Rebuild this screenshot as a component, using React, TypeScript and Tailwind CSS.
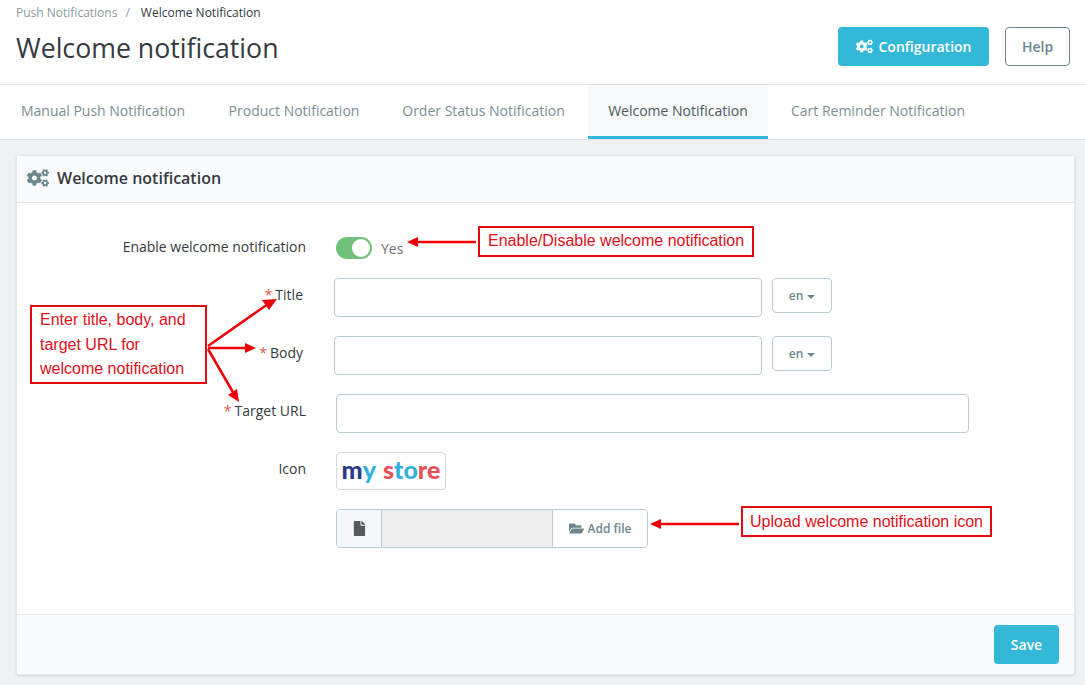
import { FaCogs, FaFile, FaFolderOpen } from "react-icons/fa";

const tabs = [
  { label: "Manual Push Notification", width: "w-[207px] pr-[1px]" },
  { label: "Product Notification", width: "w-[174px]" },
  { label: "Order Status Notification", width: "w-[207px] pr-[2px]" },
  { label: "Welcome Notification", width: "w-[180px]", active: true },
  { label: "Cart Reminder Notification", width: "w-[218px] pl-[2px]" },
];

function Required({ label, className }: { label: string; className: string }) {
  return (
    <div className={`text-right text-sm leading-5 text-[#363a41] ${className}`}>
      <span className="mr-[3px] text-[#e0584f]">*</span>
      {label}
    </div>
  );
}

function LangButton() {
  return (
    <button
      type="button"
      className="ml-[10px] flex h-[35px] w-[60px] items-center justify-center gap-1 rounded border border-[#bbcdd2] bg-white pt-[1px] text-xs font-semibold text-[#6c868e]"
    >
      en
      <span className="mt-[1px] border-x-[4px] border-t-[4px] border-x-transparent border-t-[#6c868e]" />
    </button>
  );
}

function Callout({ className, children }: { className: string; children: React.ReactNode }) {
  return (
    <div
      className={`absolute border-2 border-[#e30a0f] bg-white font-['Liberation_Sans',sans-serif] text-base text-[#e0101a] ${className}`}
    >
      {children}
    </div>
  );
}

function App() {
  return (
    <div className="relative h-[685px] w-[1085px] overflow-hidden bg-[#eff1f2] font-['Open_Sans',sans-serif]">
      <header className="flex h-[85px] justify-between border-b border-[#dfe3e5] bg-white pl-4 pr-[15px]">
        <div>
          <div className="flex pt-[4px] text-xs leading-[17px]">
            <span className="text-[#8a9aa0]">Push Notifications</span>
            <span className="ml-[8px] text-[#8a9aa0]">/</span>
            <span className="ml-[11px] text-[#363a41]">Welcome Notification</span>
          </div>
          <h1 className="mt-[7px] text-[26.7px] leading-[40px] text-[#363a41]">Welcome notification</h1>
        </div>
        <div className="flex gap-4 pt-[27px]">
          <button
            type="button"
            className="flex h-[39px] w-[151px] items-center justify-center gap-[6px] rounded bg-[#34b8d8] text-sm font-semibold text-white"
          >
            <FaCogs className="text-[17px]" />
            Configuration
          </button>
          <button
            type="button"
            className="h-[39px] w-[65px] rounded border border-[#6c868e] bg-white text-sm font-semibold text-[#6c868e]"
          >
            Help
          </button>
        </div>
      </header>

      <nav className="flex h-[55px] border-b border-[#dfe3e5] bg-white">
        {tabs.map((tab) => (
          <div
            key={tab.label}
            className={`flex items-center justify-center text-sm ${tab.width} ${
              tab.active
                ? "border-b-[3px] border-[#34b8d8] bg-[#f7f9fa] pt-[1px] text-[#4c5a60]"
                : "pb-[2px] text-[#7b8f96]"
            }`}
          >
            {tab.label}
          </div>
        ))}
      </nav>

      <section className="mx-4 mt-[15px] mr-[10px] flex h-[520px] flex-col rounded border border-[#e3e7e9] bg-white shadow-sm">
        <div className="flex h-[47px] shrink-0 items-center gap-2 border-b border-[#e3e7e9] bg-[#fafbfc] pb-[2px] pl-[10px]">
          <FaCogs className="text-[22px] text-[#6c868e]" />
          <h2 className="text-base font-semibold text-[#363a41]">Welcome notification</h2>
        </div>

        <div className="grow pt-[34px]">
          <div className="flex h-[22px] items-center">
            <div className="mb-[2px] w-[289px] text-right text-sm text-[#363a41]">Enable welcome notification</div>
            <div className="ml-[30px] flex h-[22px] w-[36px] items-center justify-end rounded-full bg-[#70c07a] pr-[2px]">
              <span className="size-[18px] rounded-full bg-white" />
            </div>
            <span className="ml-[9px] mt-[2px] text-sm text-[#6c6f73]">Yes</span>
          </div>

          <div className="mt-[19px] flex items-start">
            <Required label="Title" className="w-[286px] pt-[7px]" />
            <input className="ml-[31px] h-[39px] w-[428px] rounded border border-[#bbcdd2] bg-white" />
            <LangButton />
          </div>

          <div className="mt-[19px] flex items-start">
            <Required label="Body" className="w-[286px] pt-[7px]" />
            <input className="ml-[31px] h-[39px] w-[428px] rounded border border-[#bbcdd2] bg-white" />
            <LangButton />
          </div>

          <div className="mt-[19px] flex items-start">
            <Required label="Target URL" className="w-[289px] pt-[7px]" />
            <input className="ml-[30px] h-[39px] w-[633px] rounded border border-[#bbcdd2] bg-white" />
          </div>

          <div className="mt-[19px] flex items-start">
            <div className="w-[289px] pt-[7px] text-right text-sm leading-5 text-[#363a41]">Icon</div>
            <div className="ml-[30px] flex h-[38px] w-[110px] items-center justify-center rounded border border-[#d3d8da] bg-white pb-[3px] font-['Lato',sans-serif] text-[25px] leading-none font-black">
              <span className="text-[#2b3a8c]">m</span>
              <span className="mr-[7px] text-[#35b0dc]">y</span>
              <span className="text-[#e9515a]">s</span>
              <span className="text-[#35b0dc]">to</span>
              <span className="text-[#e9515a]">re</span>
            </div>
          </div>

          <div className="ml-[319px] mt-[19px] flex h-[39px] w-[312px] overflow-hidden rounded border border-[#bbcdd2] bg-white">
            <div className="flex w-[45px] items-center justify-center border-r border-[#bbcdd2] bg-[#f4f8fa]">
              <FaFile className="text-[15px] text-[#55595c]" />
            </div>
            <div className="grow bg-[#eeeeee]" />
            <div className="flex w-[95px] items-center justify-center gap-[4px] border-l border-[#bbcdd2] text-xs font-semibold text-[#6c868e]">
              <FaFolderOpen className="text-[15px]" />
              Add file
            </div>
          </div>
        </div>

        <div className="flex h-[60px] shrink-0 items-start justify-end border-t border-[#e9ecee] bg-[#fafbfc] pr-[15px] pt-[10px]">
          <button type="button" className="h-[39px] w-[65px] rounded bg-[#34b8d8] text-sm font-semibold text-white">
            Save
          </button>
        </div>
      </section>

      {/* screenshot annotations drawn over the page */}
      <Callout className="left-[478px] top-[226px] h-[31px] w-[276px] pl-2 leading-[25px]">
        Enable/Disable welcome notification
      </Callout>
      <Callout className="left-[30px] top-[305px] h-[79px] w-[177px] pl-2 pt-[1px] leading-[24.5px]">
        Enter title, body, and
        <br />
        target URL for
        <br />
        welcome notification
      </Callout>
      <Callout className="left-[741px] top-[506px] h-[31px] w-[251px] pl-[7px] pt-[1px] leading-[25px]">
        Upload welcome notification icon
      </Callout>

      <svg className="pointer-events-none absolute left-0 top-0" width={1085} height={685} fill="#ee0008" stroke="#ee0008">
        <line x1={476} y1={242} x2={416} y2={242} strokeWidth={2.5} />
        <polygon points="407,242 418,237 418,247" stroke="none" />
        <line x1={208} y1={346} x2={268} y2={304} strokeWidth={2.5} />
        <polygon points="277,299 269,310 262,300" stroke="none" />
        <line x1={208} y1={348} x2={247} y2={348} strokeWidth={2.5} />
        <polygon points="256,348 245,343 245,353" stroke="none" />
        <line x1={208} y1={349} x2={234} y2={394} strokeWidth={2.5} />
        <polygon points="239,402 228,395 237,389" stroke="none" />
        <line x1={739} y1={524} x2={658} y2={524} strokeWidth={2.5} />
        <polygon points="650,524 661,519 661,529" stroke="none" />
      </svg>
    </div>
  );
}

export default App;
